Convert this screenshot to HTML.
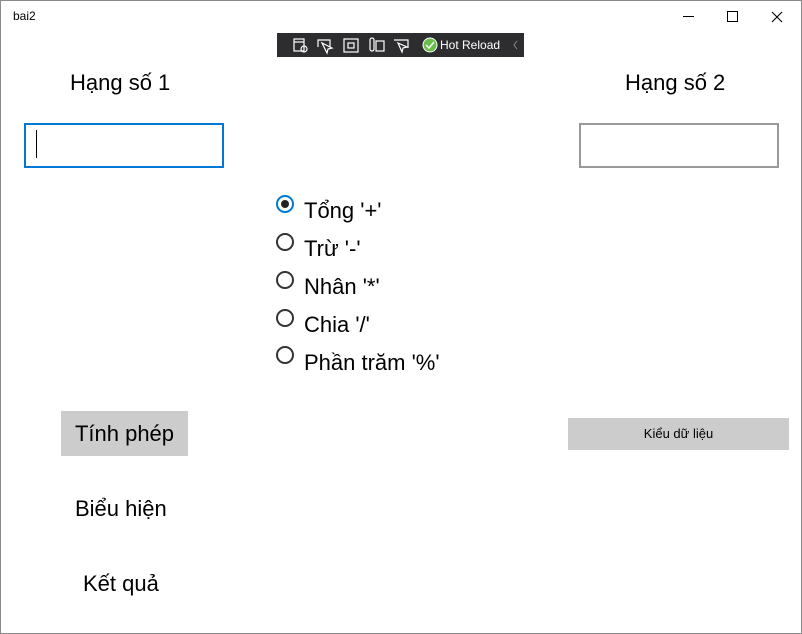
<!DOCTYPE html>
<html><head><meta charset="utf-8"><style>
body{margin:0;width:802px;height:634px;overflow:hidden;background:#fff;font-family:"Segoe UI","Liberation Sans","DejaVu Sans",sans-serif;color:#000;position:relative}
.frame{position:absolute;left:0;top:0;width:800px;height:632px;border:1px solid #8a8a8a}
.a{position:absolute;white-space:nowrap}
.big{font-size:22px}
.box{position:absolute;height:40px;width:195px;background:#fff}
.rad{position:absolute;left:276px;width:18px;height:18px;border:2px solid #333;border-radius:50%;box-sizing:border-box}
</style></head><body>
<div class="frame"></div>
<div class="a" style="left:13px;top:9px;font-size:12px">bai2</div>
<div class="a" style="left:683px;top:16px;width:11px;height:1px;background:#000"></div>
<div class="a" style="left:727px;top:11px;width:9px;height:9px;border:1px solid #000"></div>
<svg class="a" style="left:771px;top:11px" width="12" height="12"><path d="M1 1L11 11M11 1L1 11" stroke="#000" stroke-width="1.1"/></svg>
<div class="a" style="left:277px;top:33px;width:247px;height:24px;background:#2d2d30"></div>
<svg class="a" style="left:277px;top:33px" width="247" height="24">
<g stroke="#fff" fill="none" stroke-width="1.2">
<rect x="17" y="6" width="10" height="12"/><line x1="17" y1="9" x2="27" y2="9"/><circle cx="27" cy="16" r="3"/>
<path d="M41 14V7h12v7M45 10l5 10 1-4 4-1z"/>
<rect x="67" y="6" width="14" height="13"/><rect x="71" y="10" width="6" height="5"/>
<rect x="93" y="5" width="4" height="13" rx="2"/><rect x="99" y="8" width="8" height="10"/>
<path d="M117 7h14v8M121 10l4 9 1-4 4-1z"/>
</g>
<circle cx="153" cy="12" r="7" fill="#6abf4b" stroke="#fff"/><path d="M149 12l3 3 5-6" stroke="#fff" fill="none" stroke-width="1.5"/>
<text x="163" y="16" fill="#fff" font-size="12" font-family="Liberation Sans">Hot Reload</text>
<path d="M240 8l-3 4 3 4" stroke="#888" fill="none"/>
</svg>
<div class="a big" style="left:70px;top:70px">Hạng số 1</div>
<div class="a big" style="left:625px;top:70px">Hạng số 2</div>
<div class="box" style="left:24px;top:123px;border:2px solid #0078d4;box-sizing:border-box;width:200px;height:45px"></div>
<div class="a" style="left:36px;top:130px;width:1px;height:28px;background:#000"></div>
<div class="box" style="left:579px;top:123px;border:2px solid #999;box-sizing:border-box;width:200px;height:45px"></div>
<div class="rad" style="top:195px;border-color:#0078d4"></div>
<div class="a" style="left:281px;top:200px;width:8px;height:8px;border-radius:50%;background:#222"></div>
<div class="rad" style="top:233px"></div>
<div class="rad" style="top:271px"></div>
<div class="rad" style="top:309px"></div>
<div class="rad" style="top:346px"></div>
<div class="a big" style="left:304px;top:198px">Tổng '+'</div>
<div class="a big" style="left:304px;top:236px">Trừ '-'</div>
<div class="a big" style="left:304px;top:274px">Nhân '*'</div>
<div class="a big" style="left:304px;top:312px">Chia '/'</div>
<div class="a big" style="left:304px;top:350px">Phần trăm '%'</div>
<div class="a big" style="left:61px;top:411px;width:127px;height:45px;background:#ccc;line-height:45px;text-align:center">Tính phép</div>
<div class="a" style="left:568px;top:418px;width:221px;height:32px;background:#ccc;line-height:32px;text-align:center;font-size:13px">Kiểu dữ liệu</div>
<div class="a big" style="left:75px;top:496px">Biểu hiện</div>
<div class="a big" style="left:83px;top:571px">Kết quả</div>
</body></html>
